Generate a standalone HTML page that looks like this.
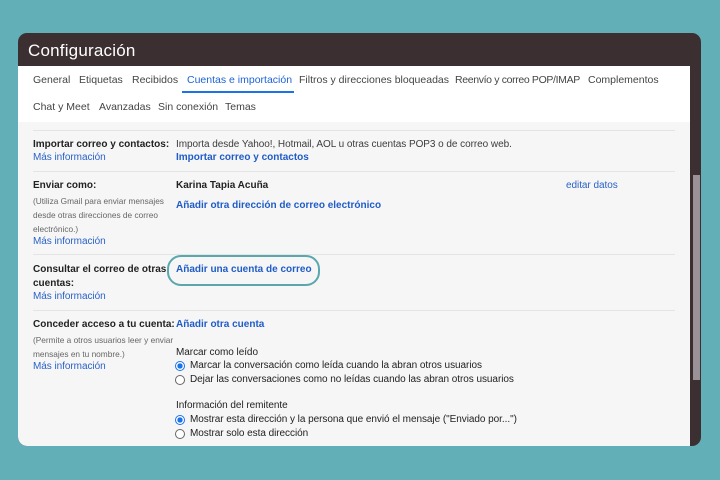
<!DOCTYPE html><html><head><style>
body{margin:0;width:720px;height:480px;background:#63afb8;position:relative;overflow:hidden;font-family:"Liberation Sans",sans-serif;}
.win{position:absolute;left:18px;top:33px;width:683px;height:413px;background:#3b2f31;border-radius:9px;overflow:hidden}
.hd{position:absolute;left:10px;top:8px;color:#fff;font-size:17px;letter-spacing:.2px}
.tabs{position:absolute;left:0;top:33px;width:672px;height:56px;background:#fff}
.main{position:absolute;left:0;top:89px;width:672px;height:324px;background:#f6f6f6;border-bottom-left-radius:9px}
.sb{position:absolute;left:675px;top:142px;width:7px;height:205px;background:#9a9296}
.t{position:absolute;font-size:10px;color:#3c3c3c;white-space:nowrap;letter-spacing:-0.05px;margin-top:1px}
.b{font-weight:bold;color:#222;letter-spacing:0}
.l{color:#2a62c9}
.lb{color:#1f5cc7;font-weight:bold;letter-spacing:0}
.s{font-size:8.3px;color:#666;letter-spacing:0}
.tab{position:absolute;font-size:10.5px;color:#444;white-space:nowrap;margin-top:1px}
.hr{position:absolute;width:642px;height:1px;background:#e4e4e4}
.r{position:absolute;width:8px;height:8px;border-radius:50%;border:1px solid #666;background:#fff;margin-top:1px}
.r.on{border-color:#1a73e8;background:radial-gradient(#1a73e8 45%,#fff 50%)}
</style></head><body>
<div class="win">
<div class="hd">Configuración</div>
<div class="tabs">
<span class="tab" style="left:15px;top:7px">General</span>
<span class="tab" style="left:61px;top:7px">Etiquetas</span>
<span class="tab" style="left:114px;top:7px">Recibidos</span>
<span class="tab" style="left:169px;top:7px;color:#1a63d8">Cuentas e importación</span>
<div style="position:absolute;left:164px;width:112px;height:2px;background:#1a73e8;top:25px"></div>
<span class="tab" style="left:281px;top:7px">Filtros y direcciones bloqueadas</span>
<span class="tab" style="left:437px;top:7px;letter-spacing:-0.35px">Reenvío y correo POP/IMAP</span>
<span class="tab" style="left:570px;top:7px">Complementos</span>
<span class="tab" style="left:15px;top:34px">Chat y Meet</span>
<span class="tab" style="left:81px;top:34px">Avanzadas</span>
<span class="tab" style="left:140px;top:34px">Sin conexión</span>
<span class="tab" style="left:207px;top:34px">Temas</span>
</div>
<div class="main"></div>
<div class="sb"></div>
</div>
<div class="hr" style="left:33px;top:130px"></div>
<div class="hr" style="left:33px;top:171px"></div>
<div class="hr" style="left:33px;top:254px"></div>
<div class="hr" style="left:33px;top:310px"></div>
<span class="t b" style="left:33px;top:138px">Importar correo y contactos:</span>
<span class="t l" style="left:33px;top:151px">Más información</span>
<span class="t" style="left:176px;top:138px">Importa desde Yahoo!, Hotmail, AOL u otras cuentas POP3 o de correo web.</span>
<span class="t lb" style="left:176px;top:151px">Importar correo y contactos</span>
<span class="t b" style="left:33px;top:179px">Enviar como:</span>
<span class="t s" style="left:33px;top:195px">(Utiliza Gmail para enviar mensajes</span>
<span class="t s" style="left:33px;top:209px">desde otras direcciones de correo</span>
<span class="t s" style="left:33px;top:223px">electrónico.)</span>
<span class="t l" style="left:33px;top:235px">Más información</span>
<span class="t b" style="left:176px;top:179px">Karina Tapia Acuña</span>
<span class="t lb" style="left:176px;top:199px">Añadir otra dirección de correo electrónico</span>
<span class="t l" style="left:566px;top:179px">editar datos</span>
<span class="t b" style="left:33px;top:263px">Consultar el correo de otras</span>
<span class="t b" style="left:33px;top:277px">cuentas:</span>
<span class="t l" style="left:33px;top:290px">Más información</span>
<div style="position:absolute;left:167px;top:255px;width:149px;height:27px;border:2px solid #5aa7ad;border-radius:14px"></div>
<span class="t lb" style="left:176px;top:263px">Añadir una cuenta de correo</span>
<span class="t b" style="left:33px;top:318px">Conceder acceso a tu cuenta:</span>
<span class="t s" style="left:33px;top:334px">(Permite a otros usuarios leer y enviar</span>
<span class="t s" style="left:33px;top:348px">mensajes en tu nombre.)</span>
<span class="t l" style="left:33px;top:360px">Más información</span>
<span class="t lb" style="left:176px;top:318px">Añadir otra cuenta</span>
<span class="t" style="left:176px;top:346px;color:#222">Marcar como leído</span>
<div class="r on" style="left:175px;top:360px"></div>
<span class="t" style="left:190px;top:359px;color:#222">Marcar la conversación como leída cuando la abran otros usuarios</span>
<div class="r" style="left:175px;top:374px"></div>
<span class="t" style="left:190px;top:373px;color:#222">Dejar las conversaciones como no leídas cuando las abran otros usuarios</span>
<span class="t" style="left:176px;top:399px;color:#222">Información del remitente</span>
<div class="r on" style="left:175px;top:414px"></div>
<span class="t" style="left:190px;top:413px;color:#222">Mostrar esta dirección y la persona que envió el mensaje ("Enviado por...")</span>
<div class="r" style="left:175px;top:428px"></div>
<span class="t" style="left:190px;top:427px;color:#222">Mostrar solo esta dirección</span>
</body></html>
